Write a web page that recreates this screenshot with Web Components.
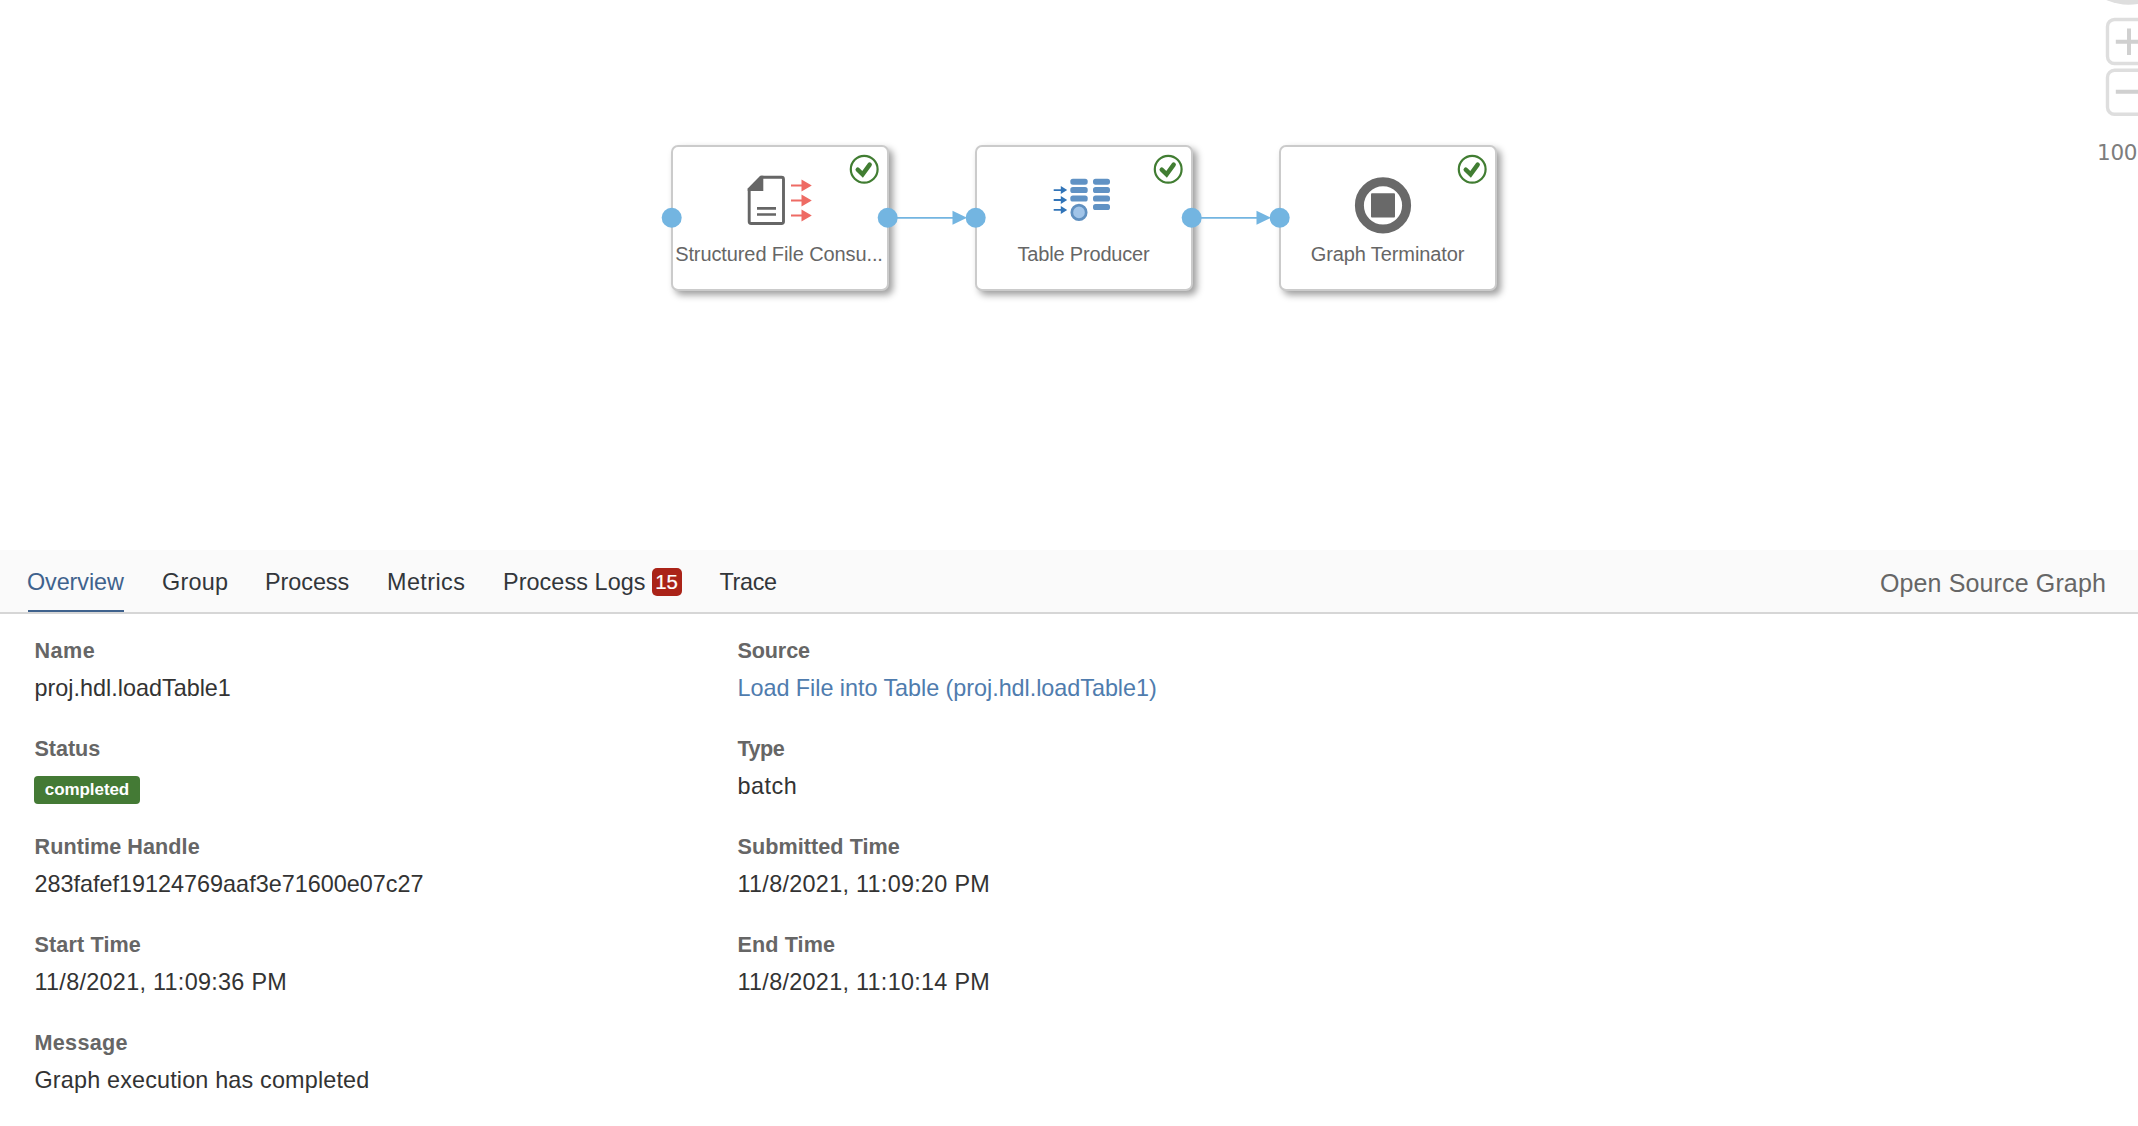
<!DOCTYPE html>
<html lang="en">
<head>
<meta charset="utf-8">
<title>Graph run</title>
<style>
html,body{margin:0;height:100%;overflow:hidden;background:#fff;font-family:"Liberation Sans",Arial,sans-serif}
</style>
</head>
<body>
<graph-monitor></graph-monitor>
<script>
function define(name, html, setup) {
  const template = document.createElement('template');
  template.innerHTML = html;
  customElements.define(name, class extends HTMLElement {
    constructor() {
      super();
      this.attachShadow({ mode: 'open' }).append(template.content.cloneNode(true));
    }
    connectedCallback() { if (setup) setup(this, this.shadowRoot); }
  });
}

/* Operator node on the canvas, with its ports and status mark */
define('graph-node', `
<style>
:host{position:absolute;display:block;box-sizing:border-box;width:218px;height:146px;border:2px solid #cbcbcb;border-radius:7px;background:#fff;box-shadow:4px 4px 7px rgba(0,0,0,.38)}
.label{box-sizing:border-box;padding-top:96px;line-height:22px;font-size:20px;color:#666;text-align:center;white-space:nowrap}
svg,::slotted(svg){position:absolute;left:-2px;top:-2px;width:218px;height:146px;overflow:visible}
</style>
<slot name="icon"></slot>
<div class="label"><slot></slot></div>
<svg viewBox="671 145 218 146" fill="none">
  <circle cx="864.2" cy="169.3" r="13.4" stroke="#417d32" stroke-width="2.2"/>
  <path d="M857.7 169.7 862.6 174.4 869.7 164.6" stroke="#417d32" stroke-width="4.4" stroke-linecap="round"/>
  <circle cx="671.7" cy="217.7" r="10" fill="#73b5e1"/>
  <circle class="out" cx="887.7" cy="217.7" r="10" fill="#73b5e1"/>
</svg>`, (host, root) => {
  host.style.left = host.getAttribute('x') + 'px';
  host.style.top = host.getAttribute('y') + 'px';
  if (host.hasAttribute('last')) root.querySelector('.out').remove();
});

define('graph-link', `
<style>:host{position:absolute;display:block;top:208px;width:78px;height:20px}svg{display:block}</style>
<svg width="78" height="20"><path d="M0 9.8H58" stroke="#73b5e1" stroke-width="1.7"/><path d="M55.5 2.8V16.8L70 9.8Z" fill="#73b5e1"/></svg>`,
(host) => { host.style.left = host.getAttribute('x') + 'px'; });

define('zoom-controls', `
<style>
:host{position:absolute;left:2096px;top:0;width:66px;display:flex;flex-direction:column;align-items:flex-start}
svg{display:block}
span{font:21.5px/26px "DejaVu Sans",sans-serif;letter-spacing:-.3px;color:#7d7d7d;margin-top:20px;margin-left:1px}
</style>
<svg width="66" height="120" fill="none">
  <circle cx="32.5" cy="-50" r="54.7" fill="#dedede"/>
  <rect x="11.5" y="19.5" width="44" height="44" rx="7" stroke="#dedede" stroke-width="3.4"/>
  <rect x="11.5" y="70.3" width="44" height="44" rx="7" stroke="#dedede" stroke-width="3.4"/>
  <path d="M19.8 41.7H46.2M33 28.6V55M19.8 91.8H46.2" stroke="#d0d0d0" stroke-width="4"/>
</svg>
<span>100</span>`);

define('graph-canvas', `
<style>:host{display:block;position:relative;height:550px;overflow:hidden;background:#fff}</style>
<graph-node x="671" y="145"><span style="letter-spacing:-.1px;margin-left:-2px">Structured File Consu...</span>
  <svg slot="icon" viewBox="671 145 218 146" fill="none">
    <path d="M761 177.2H781.5Q783.5 177.2 783.5 179.2V221.5Q783.5 223.5 781.5 223.5H751.2Q749.2 223.5 749.2 221.5V189" stroke="#666" stroke-width="2.9"/>
    <path d="M747.7 188.5 760.2 175.7H763.3V191H747.7Z" fill="#666"/>
    <path d="M757 208.4H776M757 214.5H776" stroke="#666" stroke-width="2.7"/>
    <path d="M791 185.4H803M791 200.4H803M791 215.4H803" stroke="#ee6b64" stroke-width="2"/>
    <path d="M801.5 179.4V191.4L811.8 185.4ZM801.5 194.4V206.4L811.8 200.4ZM801.5 209.4V221.4L811.8 215.4Z" fill="#ee6b64"/>
  </svg>
</graph-node>
<graph-node x="975" y="145"><span style="letter-spacing:-.17px;margin-left:-1px">Table Producer</span>
  <svg slot="icon" viewBox="975 145 218 146" fill="none">
    <g fill="#6092c4">
      <rect x="1070.3" y="178.7" width="17.4" height="6" rx="2.6"/><rect x="1093" y="178.7" width="17" height="6" rx="2.6"/>
      <rect x="1070.3" y="187.1" width="17.4" height="6" rx="2.6"/><rect x="1093" y="187.1" width="17" height="6" rx="2.6"/>
      <rect x="1070.3" y="195.5" width="17.4" height="6" rx="2.6"/><rect x="1093" y="195.5" width="17" height="6" rx="2.6"/>
      <rect x="1093" y="204" width="17" height="6" rx="2.6"/>
    </g>
    <circle cx="1079" cy="212.4" r="7.2" fill="#a1c4e8" stroke="#6090c0" stroke-width="2.7"/>
    <path d="M1053.7 190.1H1062M1053.7 200H1062M1053.7 209.9H1062" stroke="#3174b8" stroke-width="1.8"/>
    <path d="M1060.8 186.1V194.1L1067.2 190.1ZM1060.8 196V204L1067.2 200ZM1060.8 205.9V213.9L1067.2 209.9Z" fill="#3174b8"/>
  </svg>
</graph-node>
<graph-node x="1279" y="145" last><span style="letter-spacing:-.1px;margin-left:-1px">Graph Terminator</span>
  <svg slot="icon" viewBox="1279 145 218 146" fill="none">
    <circle cx="1383" cy="205.4" r="23.6" stroke="#696969" stroke-width="9"/>
    <rect x="1371" y="193.3" width="24" height="24.3" rx="1" fill="#696969"/>
  </svg>
</graph-node>
<graph-link x="897"></graph-link>
<graph-link x="1201"></graph-link>
<zoom-controls></zoom-controls>`);

define('tab-item', `
<style>
:host{display:flex;box-sizing:border-box;height:62px;padding-top:2px;line-height:60px;font-size:23.4px;color:#32363a;white-space:nowrap}
:host([selected]){color:#3f628d;border-bottom:2px solid #3f628d}
:host([selected]) .t{margin-left:-1px}
</style><span class="t"><slot></slot></span><slot name="badge"></slot>`,
(host) => {
  host.style.width = host.getAttribute('w') + 'px';
  host.style.letterSpacing = (host.getAttribute('ls') || 0) + 'px';
});

define('count-badge', `
<style>:host{display:block;box-sizing:border-box;width:30px;height:28px;margin:16px 0 0 auto;border-radius:5px;background:#aa2318;color:#fff;font-size:20.4px;line-height:28px;letter-spacing:-.1px;text-align:center;-webkit-text-stroke:.2px #fff}</style><slot></slot>`);

define('tab-bar', `
<style>
:host{display:flex;gap:38px;box-sizing:border-box;height:64px;padding:0 32px 0 28px;background:#fafafa;border-bottom:2px solid #d6d6d6}
.action{margin-left:auto;padding-top:3px;line-height:60px;font-size:25px;letter-spacing:.135px;color:#666}
</style>
<tab-item w="96" ls="-.1" selected>Overview</tab-item>
<tab-item w="65" ls=".28">Group</tab-item>
<tab-item w="84" ls="-.05">Process</tab-item>
<tab-item w="78" ls=".42">Metrics</tab-item>
<tab-item w="178.5" ls=".07">Process Logs<count-badge slot="badge">15</count-badge></tab-item>
<tab-item w="57" ls="-.33">Trace</tab-item>
<span class="action">Open Source Graph</span>`);

define('info-field', `
<style>
:host{display:block;height:63px;white-space:nowrap;color:#333}
.k{font-weight:700;font-size:21.6px;line-height:25px;color:#666}
.v{margin-top:12px;height:26px;font-size:23.4px;line-height:26px}
:host([link]) .v{color:#4f7cae}
</style><div class="k"></div><div class="v"><slot></slot></div>`,
(host, root) => {
  const k = root.querySelector('.k');
  k.textContent = host.getAttribute('label');
  k.style.letterSpacing = (host.getAttribute('kls') || 0) + 'px';
  root.querySelector('.v').style.letterSpacing = (host.getAttribute('vls') || 0) + 'px';
});

define('status-chip', `
<style>:host{display:block;position:relative;top:3px;box-sizing:border-box;width:106px;height:28px;margin-left:-.5px;border-radius:4px;background:#447a35;color:#fff;font-weight:700;font-size:17px;line-height:27px;letter-spacing:-.08px;text-align:center}</style><slot></slot>`);

define('run-details', `
<style>:host{display:grid;grid-template-columns:703px 703px;row-gap:35px;padding:24px 0 0 34.5px}</style>
<info-field label="Name" kls=".5">proj.hdl.loadTable1</info-field>
<info-field label="Source" kls="-.14" vls="-.04" link>Load File into Table (proj.hdl.loadTable1)</info-field>
<info-field label="Status" kls="-.06"><status-chip>completed</status-chip></info-field>
<info-field label="Type" kls="-.5" vls=".5">batch</info-field>
<info-field label="Runtime Handle" kls=".06">283fafef19124769aaf3e71600e07c27</info-field>
<info-field label="Submitted Time" kls=".06" vls=".29">11/8/2021, 11:09:20 PM</info-field>
<info-field label="Start Time" kls=".13" vls=".29">11/8/2021, 11:09:36 PM</info-field>
<info-field label="End Time" kls=".1" vls=".29">11/8/2021, 11:10:14 PM</info-field>
<info-field label="Message" kls=".3" vls=".16">Graph execution has completed</info-field>`);

define('graph-monitor', `
<style>:host{display:flex;flex-direction:column;height:1126px;overflow:hidden}</style>
<graph-canvas></graph-canvas>
<tab-bar></tab-bar>
<run-details></run-details>`);
</script>
</body>
</html>
